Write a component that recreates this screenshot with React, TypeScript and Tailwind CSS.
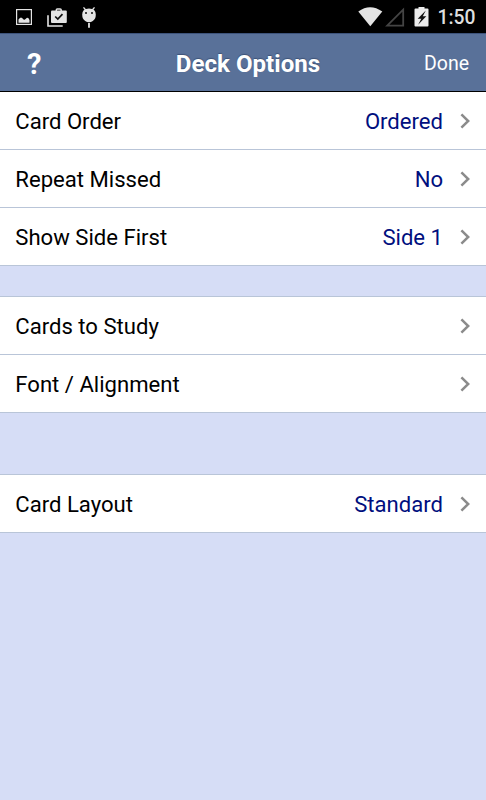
interface OptionRowProps {
  label: string;
  value?: string;
}

const Chevron = () => (
  <svg className="ml-[17px] h-4 w-3 shrink-0" viewBox="0 0 12 16" fill="none">
    <path d="M1.4 1.3 L8.2 8 L1.4 14.7" stroke="#8b8b8b" strokeWidth="2.5" />
  </svg>
);

const OptionRow = ({ label, value }: OptionRowProps) => (
  <div className="flex h-[58px] items-center border-b border-[#b9c5d8] bg-white pl-[15px] pr-[14px] text-[22.1px] leading-[26px]">
    <span className="flex-1 pt-px pl-[0.3px] text-black">{label}</span>
    {value && <span className="pt-px text-[#000f7e]">{value}</span>}
    <Chevron />
  </div>
);

const StatusBar = () => (
  <div className="flex h-[33px] items-center justify-between bg-black">
    <svg className="h-[33px] w-[110px]" viewBox="0 0 110 33" fill="none">
      {/* picture */}
      <rect x="16.6" y="9.6" width="14.8" height="14.8" stroke="#e4e4e4" strokeWidth="1.2" />
      <path d="M18.5 22.7V19.5l1.7-1.8h1.6l1.7 1.8 1.2.2 2.3-1.9 1.3.2 1.2 2v2.7z" fill="#e4e4e4" />
      {/* checked briefcase */}
      <path d="M48 15.3V26h14.7" stroke="#e4e4e4" strokeWidth="1.6" />
      <path d="M56.3 11.5V10q0-1 1-1h2.9q1 0 1 1v1.5" stroke="#e4e4e4" strokeWidth="1.5" />
      <path d="M52 10.5h13.8q1 0 1 1v10.5q0 1-1 1H52q-1 0-1-1V11.5q0-1 1-1z" fill="#e4e4e4" />
      <path d="M55.2 16.5l2.6 2.6 4.7-4.9" stroke="#111" strokeWidth="1.7" />
      {/* android head */}
      <path d="M83.5 7.3l2.2 2.7M94.5 7.3l-2.2 2.7" stroke="#e4e4e4" strokeWidth="1.3" />
      <path d="M82.2 14.5q0-6 6.8-6t6.8 6q0 4.5-3 6.5-1.8 1.3-3.8 1.3t-3.800-1.3q-3-2-3-6.500z" fill="#e4e4e4" />
      <path d="M89 23v4.7" stroke="#e4e4e4" strokeWidth="1.8" />
      <circle cx="86" cy="13" r="1" fill="#111" />
      <circle cx="92" cy="13" r="1" fill="#111" />
    </svg>
    <div className="flex items-center pr-[10px]">
      <svg className="h-[33px] w-[80px]" viewBox="0 0 80 33" fill="none">
        {/* wifi */}
        <path d="M2.3 11.5Q14 2.8 26.3 11.5L14.3 26.3z" fill="#e4e4e4" />
        {/* mobile signal */}
        <path d="M31.2 25.7L47.2 9.7v16z" stroke="#444" strokeWidth="1.8" />
        {/* charging battery */}
        <path d="M59.5 8.5h3V7h6v1.5h3q1 0 1 1v16q0 1-1 1h-12q-1 0-1-1v-16q0-1 1-1z" fill="#ececec" />
        <path d="M69.8 10.5l-8.1 8.2h3.6l-3.2 6 8.2-8.5h-3.5z" fill="#111" />
      </svg>
      <span className="ml-[1.5px] w-[38.5px] whitespace-nowrap pt-[2px] text-[19.3px] font-medium leading-[31px] text-[#dedede]">1:50</span>
    </div>
  </div>
);

const Header = () => (
  <div className="grid h-[59px] grid-cols-[1fr_auto_1fr] items-center border-b border-black border-t border-t-[#3d537b] bg-[#597199] pl-[27px] pr-[17px] text-white">
    <span className="pt-[4px] text-[29px] font-bold leading-[53px]">?</span>
    <h1 className="pt-[3px] text-[24.1px] font-bold leading-[54px] [text-shadow:0_-1px_1px_#3e5378]">Deck Options</h1>
    <span className="pt-[2px] text-right text-[19.5px] leading-[55px]">Done</span>
  </div>
);

const App = () => (
  <div className="min-h-screen bg-[#d6ddf6] font-['Roboto',sans-serif]">
    <StatusBar />
    <Header />
    <div>
      <OptionRow label="Card Order" value="Ordered" />
      <OptionRow label="Repeat Missed" value="No" />
      <OptionRow label="Show Side First" value="Side 1" />
    </div>
    <div className="mt-[30px] border-t border-[#b9c5d8]">
      <OptionRow label="Cards to Study" />
      <OptionRow label="Font / Alignment" />
    </div>
    <div className="mt-[61px] border-t border-[#b9c5d8]">
      <OptionRow label="Card Layout" value="Standard" />
    </div>
  </div>
);

export default App;
